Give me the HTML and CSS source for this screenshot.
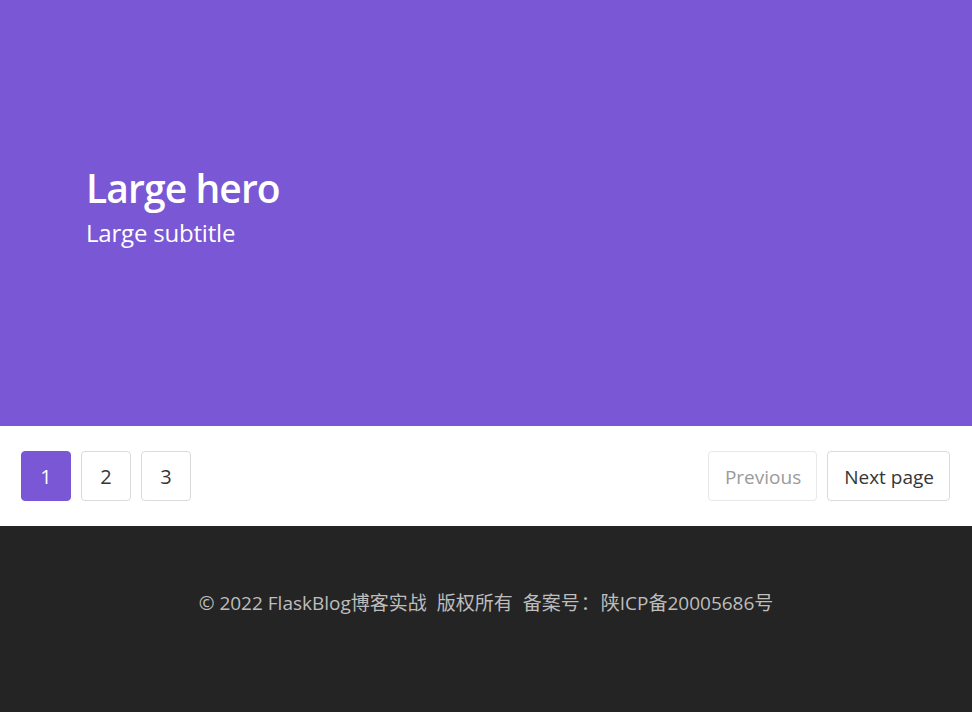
FILE: index.html
```html
<!DOCTYPE html>
<html lang="zh">
<head>
<meta charset="utf-8">
<title>FlaskBlog</title>
<link rel="stylesheet" href="styles.css">
</head>
<body>
<section class="hero">
  <div class="hero-body">
    <h1 class="title">Large hero</h1>
    <p class="subtitle">Large subtitle</p>
  </div>
</section>
<nav class="pagination">
  <ul class="pagination-list">
    <li><a class="pagination-link is-current">1</a></li>
    <li><a class="pagination-link">2</a></li>
    <li><a class="pagination-link">3</a></li>
  </ul>
  <div class="pagination-nav">
    <a class="pagination-link is-disabled">Previous</a>
    <a class="pagination-link">Next page</a>
  </div>
</nav>
<footer class="footer">
  <p>© 2022 FlaskBlog博客实战<span class="sep"> </span>版权所有<span class="sep"> </span>备案号<span class="colon">：</span>陕ICP备20005686号</p>
</footer>
</body>
</html>
```

FILE: styles.css
```css
html, body {
  margin: 0;
  padding: 0;
}
body {
  font-family: "Open Sans", "Noto Sans CJK SC", sans-serif;
  color: #4a4a4a;
  background: #fff;
}
.hero {
  background: #7957d5;
  height: 426px;
  box-sizing: border-box;
  padding: 166px 0 0 86px;
}
.title {
  margin: 0;
  color: #fff;
  font-size: 39px;
  font-weight: 600;
  line-height: 1.125;
  letter-spacing: -0.9px;
}
.subtitle {
  margin: 8px 0 0;
  color: #fff;
  font-size: 24px;
  font-weight: 400;
  line-height: 1.25;
  letter-spacing: -0.2px;
}
.pagination {
  height: 100px;
  box-sizing: border-box;
  padding: 0 22px 0 21px;
  display: flex;
  align-items: center;
  justify-content: space-between;
  font-size: 20px;
}
.pagination-list {
  list-style: none;
  margin: 0;
  padding: 0;
  display: flex;
  gap: 10px;
}
.pagination-nav {
  display: flex;
  gap: 10px;
}
.pagination-link {
  box-sizing: border-box;
  height: 50px;
  min-width: 50px;
  padding: 0 15px;
  display: flex;
  align-items: center;
  justify-content: center;
  border: 1px solid #dbdbdb;
  border-radius: 4px;
  color: #363636;
  background: #fff;
  text-decoration: none;
}
.pagination-nav .pagination-link {
  font-size: 19px;
  padding: 1px 15px 0 16px;
}
.pagination-link.is-current {
  background: #7957d5;
  border-color: #7957d5;
  color: #fff;
}
.pagination-link.is-disabled {
  border-color: #e8e8e8;
  color: #9a9a9a;
}
.footer {
  background: #242424;
  height: 186px;
  box-sizing: border-box;
  padding-top: 63px;
  text-align: center;
}
.footer p {
  margin: 0;
  color: #bdbdbd;
  font-size: 19px;
  line-height: 26px;
}
.footer .sep {
  word-spacing: 5px;
}
.footer .colon {
  font-family: "Noto Sans CJK JP", sans-serif;
  margin: 0 1px;
}
```
